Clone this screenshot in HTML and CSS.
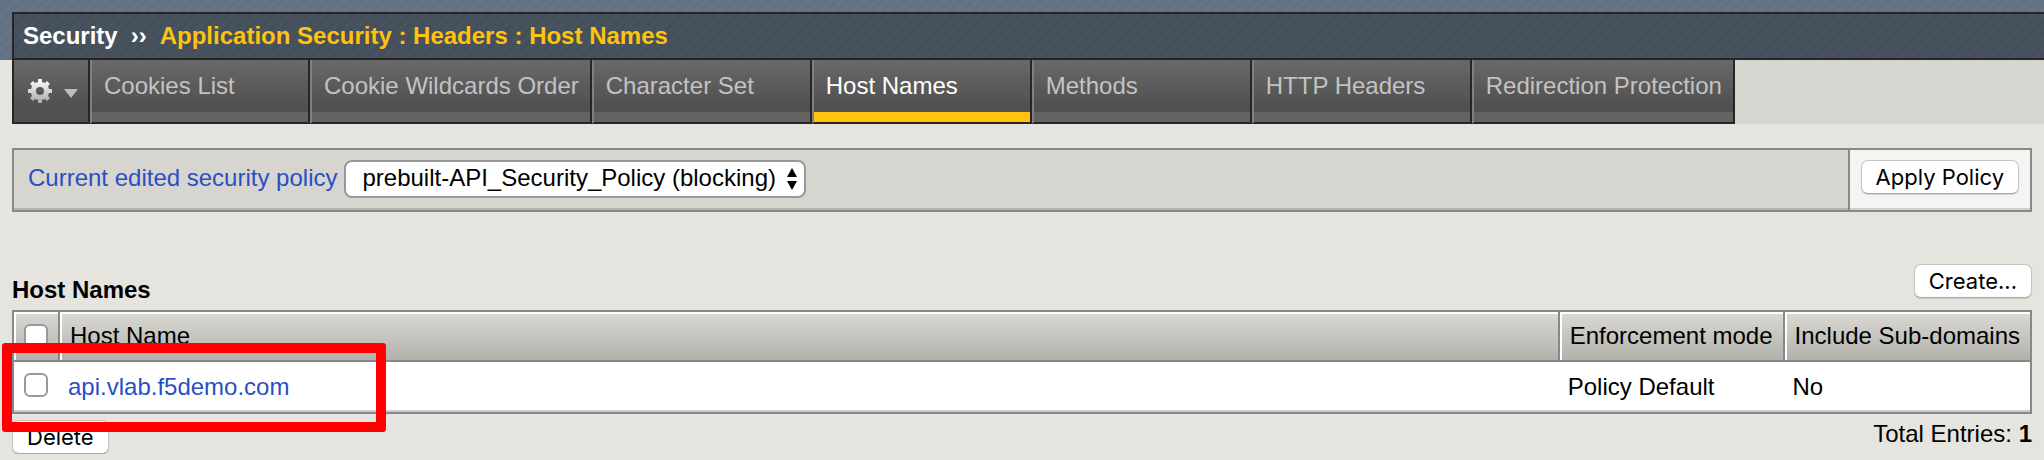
FILE: index.html
```html
<!DOCTYPE html>
<html lang="en">
<head>
<meta charset="utf-8">
<title>Host Names</title>
<link rel="stylesheet" href="styles.css">
</head>
<body>
<header class="banner">
  <h1 class="crumbs"><span class="crumb-root">Security</span><span class="crumb-sep">››</span><span>Application Security : Headers : Host Names</span></h1>
</header>
<nav class="tabs">
  <button class="gear" type="button" aria-label="Options">
    <svg class="gear-icon" width="26" height="26" viewBox="0 0 26 26" aria-hidden="true">
      <defs>
        <linearGradient id="metal" x1="0" y1="0" x2="0" y2="1"><stop offset="0" stop-color="#fff"/><stop offset="1" stop-color="#a8a8a8"/></linearGradient>
      </defs>
      <path fill="url(#metal)" fill-rule="evenodd" d="M11 1h4v3l3 1 2-2 3 3-2 2 1 3h3v4h-3l-1 3 2 2-3 3-2-2-3 1v3h-4v-3l-3-1-2 2-3-3 2-2-1-3H1v-4h3l1-3-2-2 3-3 2 2 3-1zM13 9a4 4 0 1 0 0 8a4 4 0 1 0 0-8z"/>
    </svg>
    <svg class="caret" width="14" height="9" viewBox="0 0 14 9" aria-hidden="true"><path d="M0 0h14L7 9z" fill="#bdbdbd"/></svg>
  </button>
  <a class="tab" href="#">Cookies List</a>
  <a class="tab" href="#">Cookie Wildcards Order</a>
  <a class="tab" href="#">Character Set</a>
  <a class="tab tab-active" href="#" aria-current="page">Host Names</a>
  <a class="tab" href="#">Methods</a>
  <a class="tab" href="#">HTTP Headers</a>
  <a class="tab" href="#">Redirection Protection</a>
</nav>
<main class="content">
  <section class="policy">
    <div class="policy-main">
      <label class="policy-label" for="policy">Current edited security policy</label>
      <span class="picker">
        <select id="policy" class="picker-select"><option>prebuilt-API_Security_Policy (blocking)</option></select>
        <svg class="picker-arrows" width="12" height="22" viewBox="0 0 12 22" aria-hidden="true"><path d="M6 0l5 9H1zM6 22l5-9H1z"/></svg>
      </span>
    </div>
    <div class="policy-action"><button class="btn" type="button">Apply Policy</button></div>
  </section>
  <div class="list-head">
    <h2 class="list-title">Host Names</h2>
    <button class="btn" type="button">Create...</button>
  </div>
  <div class="list">
    <table class="grid">
      <thead>
        <tr><th class="col-check"><input class="check" type="checkbox" aria-label="Select all"></th><th>Host Name</th><th class="col-fit">Enforcement mode</th><th class="col-fit">Include Sub-domains</th></tr>
      </thead>
      <tbody>
        <tr><td class="col-check"><input class="check" type="checkbox" aria-label="Select api.vlab.f5demo.com"></td><td><a class="link" href="#">api.vlab.f5demo.com</a></td><td>Policy Default</td><td>No</td></tr>
      </tbody>
    </table>
    <div class="marker"></div>
  </div>
  <footer class="list-foot">
    <button class="btn" type="button">Delete</button>
    <p class="total">Total Entries: <b>1</b></p>
  </footer>
</main>
</body>
</html>
```
FILE: styles.css
```css
* { box-sizing: border-box; }
body {
  margin: 0;
  background: #e5e4df;
  color: #000;
  font: 24px/28px "Liberation Sans", Arial, sans-serif;
}
.banner {
  padding: 12px 0 0 12px;
  background: repeating-linear-gradient(135deg, #5f7183, #677787 4px, #5f7183 8px);
}
.crumbs {
  display: flex;
  margin: 0;
  padding: 8px 9px;
  border: 2px solid #262626;
  border-right: 0;
  font-size: 24px;
  line-height: 28px;
  color: #ffc20e;
  background: repeating-linear-gradient(135deg, #434f5c, #4a535d 4px, #434f5c 8px);
}
.crumb-root, .crumb-sep { color: #fff; }
.crumb-sep { margin: 0 13px; }
.tabs {
  display: flex;
  margin-left: 12px;
  background: #d6d5cf;
}
.gear, .tab {
  height: 64px;
  border: solid #262626;
  border-width: 0 2px 2px 0;
}
.gear {
  display: flex;
  align-items: center;
  gap: 11px;
  padding: 0 10px 0 13px;
  border-left-width: 2px;
  background: linear-gradient(#696969, #505050 75%);
}
.caret { margin-top: 4px; }
.tab {
  min-width: 220px;
  padding: 12px 11px 0 12px;
  border-left: 2px solid #808080;
  color: #c3c3c3;
  text-decoration: none;
  white-space: nowrap;
  background: linear-gradient(#636363, #636363) bottom / 100% 10px no-repeat, linear-gradient(#696969, #505050 75%);
}
.tab-active {
  color: #fff;
  background: linear-gradient(#ffc20e, #ffc20e) bottom / 100% 10px no-repeat, linear-gradient(#696969, #505050 75%);
}
.content { padding: 24px 12px 0; }
.policy {
  display: flex;
  height: 64px;
  border: 2px solid #888;
  background: #d6d5cf;
}
.policy-main, .policy-action { box-shadow: inset 0 -2px #b5b4af; }
.policy-main {
  display: flex;
  flex: 1;
  align-items: flex-start;
  gap: 7px;
  padding: 10px 14px;
}
.policy-label { padding-top: 4px; color: #2a4fc4; }
.picker { display: grid; align-items: center; }
.picker-select, .picker-arrows { grid-area: 1 / 1; }
.picker-select {
  height: 38px;
  padding: 0 28px 2px 16px;
  border: 2px solid #999;
  border-radius: 8px;
  appearance: none;
  font: inherit;
  color: #000;
  background: #fff;
}
.picker-arrows { justify-self: end; margin-right: 8px; pointer-events: none; }
.policy-action {
  padding: 10px 11px;
  border-left: 2px solid #888;
  background: #f5f4f2;
  box-shadow: inset 0 -2px #d2d1ce;
}
.btn {
  display: block;
  height: 34px;
  padding: 0 14px;
  border: 1px solid #c4c4c0;
  border-bottom-color: #aaa;
  border-radius: 7px;
  font: 22px/32px Inter, sans-serif;
  color: #000;
  background: #fff;
  box-shadow: 0 1px 1px #0002;
}
.list-head {
  display: flex;
  justify-content: space-between;
  align-items: flex-start;
  height: 98px;
  padding-top: 52px;
}
.list-title { margin: 0; padding-top: 12px; font-size: 24px; line-height: 28px; }
.list { position: relative; }
.grid {
  width: 100%;
  border: 2px solid #888;
  border-spacing: 0;
  background: #fff;
}
.grid th {
  height: 50px;
  padding: 0 10px;
  border-bottom: 2px solid #888;
  font-weight: 400;
  text-align: left;
  white-space: nowrap;
  background: linear-gradient(#dad9d4, #b3b1ac);
  box-shadow: inset 2px 2px #fff;
}
.grid th + th { border-left: 2px solid #888; }
.grid td { height: 50px; padding: 0 10px; box-shadow: inset 0 -2px #ccc; }
.grid .col-check { width: 44px; padding: 0 10px; }
.grid td.col-check { padding-bottom: 4px; }
.grid .col-fit { width: 1px; }
.check {
  display: block;
  width: 24px;
  height: 24px;
  margin: 0;
  border: 2px solid #999;
  border-radius: 6px;
  appearance: none;
  background: #fff;
}
.link { color: #2a4fc4; text-decoration: none; }
.marker {
  position: absolute;
  top: 33px;
  left: -10px;
  width: 384px;
  height: 89px;
  border: 10px solid #f00;
  border-radius: 3px;
  pointer-events: none;
}
.list-foot { display: flex; justify-content: space-between; align-items: flex-start; padding-top: 6px; }
.total { margin: 0; }
```
